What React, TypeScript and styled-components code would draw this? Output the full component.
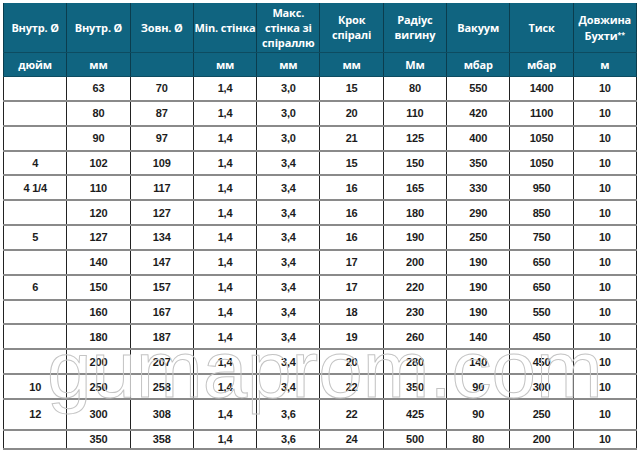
import React from "react";
import styled, { createGlobalStyle } from "styled-components";

const Global = createGlobalStyle`
  html, body { margin: 0; padding: 0; background: #ffffff; }
  body { width: 640px; height: 453px; overflow: hidden; }
`;

const Page = styled.div`
  padding: 3px 3px 0 3px;
`;

const Wrap = styled.div`
  position: relative;
  width: 634px;
`;

const Table = styled.table`
  width: 634px;
  table-layout: fixed;
  border-collapse: collapse;
  font-family: "Liberation Sans", Arial, sans-serif;
`;

const HeadCell = styled.th<{ $tall?: boolean }>`
  background: #106480;
  color: #ffffff;
  font-family: "Open Sans", "Noto Sans", sans-serif;
  font-weight: 700;
  font-size: 11px;
  line-height: 15px;
  letter-spacing: -0.15px;
  text-align: center;
  vertical-align: middle;
  padding: 0;
  height: ${(p) => (p.$tall ? "49px" : "24px")};
  border-left: 1px solid #0b3d4e;
  border-right: 1px solid #0b3d4e;
  border-bottom: 1px solid #0d4c61;
  box-sizing: border-box;
`;

const Stars = styled.span`
  font-size: 7px;
  vertical-align: 3px;
  letter-spacing: 0;
`;

const Row = styled.tr<{ $h: number }>`
  height: ${(p) => p.$h}px;
`;

const Cell = styled.td`
  color: #1c1c1c;
  font-size: 11px;
  font-weight: 700;
  letter-spacing: -0.2px;
  text-align: center;
  vertical-align: middle;
  padding: 0;
  border-left: 1px solid #222222;
  border-right: 1px solid #222222;
  border-bottom: 2px solid #8a8a8a;
`;

const Watermark = styled.div`
  position: absolute;
  left: 44px;
  top: 327px;
  font-family: "Liberation Sans", Arial, sans-serif;
  font-size: 80px;
  line-height: 1;
  color: transparent;
  -webkit-text-stroke: 1px #c4c4c4;
  white-space: nowrap;
  pointer-events: none;
`;

const heads: React.ReactNode[] = [
  "Внутр. Ø",
  "Внутр. Ø",
  "Зовн. Ø",
  "Mіn. стінка",
  "Макс. стінка зі спіраллю",
  "Крок спіралі",
  "Радіус вигину",
  "Вакуум",
  "Тиск",
  <>
    Довжина Бухти<Stars>**</Stars>
  </>,
];

const units = ["дюйм", "мм", "", "мм", "мм", "мм", "Мм", "мбар", "мбар", "м"];

const rows: string[][] = [
  ["", "63", "70", "1,4", "3,0", "15", "80", "550", "1400", "10"],
  ["", "80", "87", "1,4", "3,0", "20", "110", "420", "1100", "10"],
  ["", "90", "97", "1,4", "3,0", "21", "125", "400", "1050", "10"],
  ["4", "102", "109", "1,4", "3,4", "15", "150", "350", "1050", "10"],
  ["4 1/4", "110", "117", "1,4", "3,4", "16", "165", "330", "950", "10"],
  ["", "120", "127", "1,4", "3,4", "16", "180", "290", "850", "10"],
  ["5", "127", "134", "1,4", "3,4", "16", "190", "250", "750", "10"],
  ["", "140", "147", "1,4", "3,4", "17", "200", "190", "650", "10"],
  ["6", "150", "157", "1,4", "3,4", "17", "220", "190", "650", "10"],
  ["", "160", "167", "1,4", "3,4", "18", "230", "190", "550", "10"],
  ["", "180", "187", "1,4", "3,4", "19", "260", "140", "450", "10"],
  ["", "200", "207", "1,4", "3,4", "20", "280", "140", "450", "10"],
  ["10", "250", "258", "1,4", "3,4", "22", "350", "90", "300", "10"],
  ["12", "300", "308", "1,4", "3,6", "22", "425", "90", "250", "10"],
  ["", "350", "358", "1,4", "3,6", "24", "500", "80", "200", "10"],
];

const rowHeight = (i: number) => (i === 13 ? 31 : i === 14 ? 19 : 24.85);

export default function App() {
  return (
    <>
      <Global />
      <Page>
        <Wrap>
          <Table>
            <thead>
              <tr>
                {heads.map((h, i) => (
                  <HeadCell key={i} $tall>
                    {h}
                  </HeadCell>
                ))}
              </tr>
              <tr>
                {units.map((u, i) => (
                  <HeadCell key={i}>{u}</HeadCell>
                ))}
              </tr>
            </thead>
            <tbody>
              {rows.map((r, i) => (
                <Row key={i} $h={rowHeight(i)}>
                  {r.map((c, j) => (
                    <Cell key={j}>{c}</Cell>
                  ))}
                </Row>
              ))}
            </tbody>
          </Table>
          <Watermark>gumaprom.com</Watermark>
        </Wrap>
      </Page>
    </>
  );
}
